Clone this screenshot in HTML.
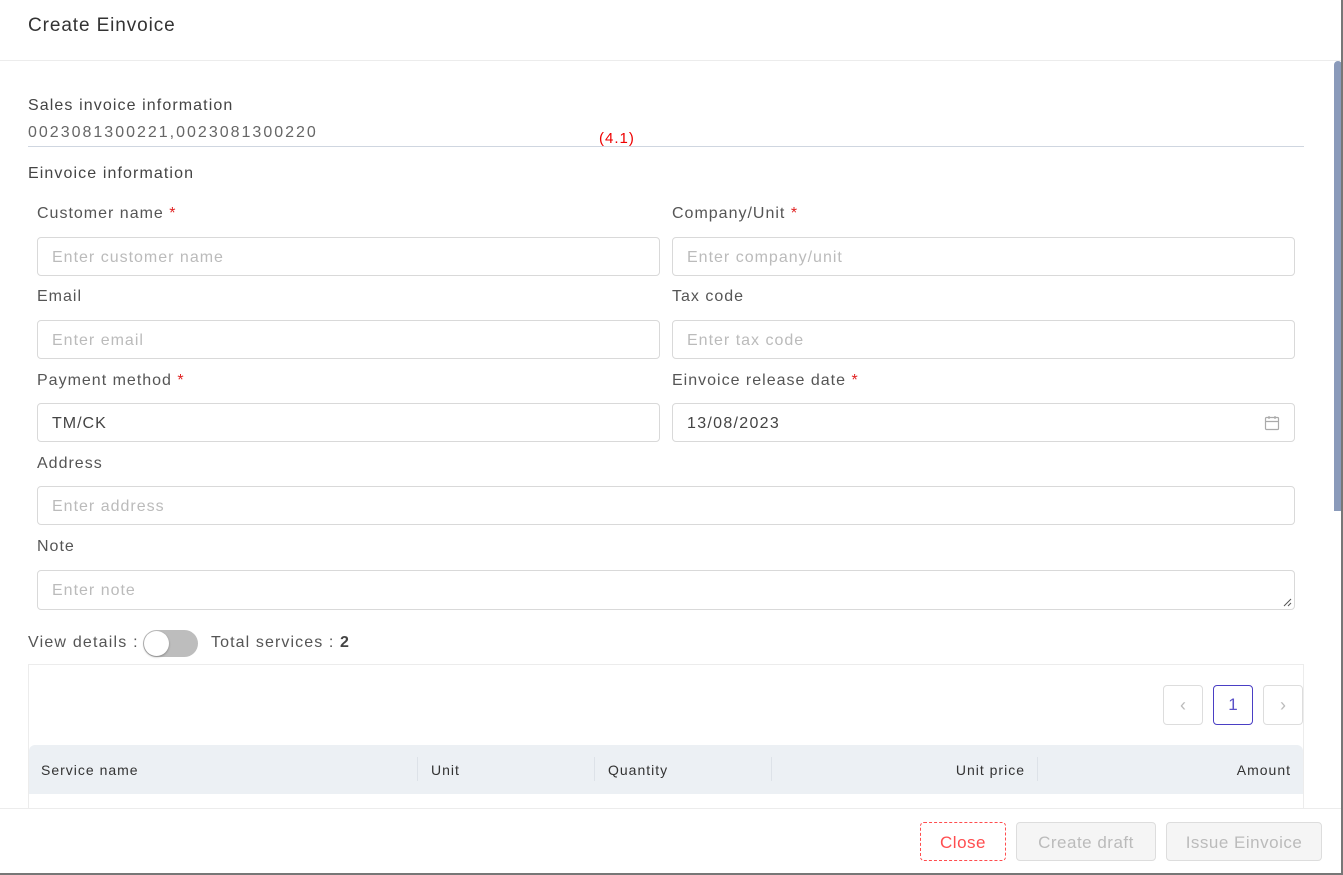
<!DOCTYPE html><html><head><style>
*{box-sizing:border-box;margin:0;padding:0}
body{width:1343px;height:875px;position:relative;overflow:hidden;background:#fff;font-family:"Liberation Sans",sans-serif;color:#555;letter-spacing:1px}
.a{position:absolute;white-space:nowrap}
.lbl{font-size:16px;color:#555}
.lbl b{color:#e02020;font-weight:normal}
.in{position:absolute;height:39px;border:1px solid #d9d9d9;border-radius:4px;font-size:16px;color:#bbb;padding:0 14px;line-height:39px}
.th{font-size:14px;color:#333;position:absolute;top:762px}
.sep{position:absolute;top:757px;width:1px;height:24px;background:#dde2e8}
.btn{position:absolute;top:822px;height:39px;border-radius:4px;font-size:17px;line-height:39px;text-align:center;letter-spacing:0.5px}
</style></head><body>
<div class="a" style="left:28px;top:15px;font-size:19px;color:#333;letter-spacing:0.9px">Create Einvoice</div>
<div class="a" style="left:0;top:60px;width:1341px;height:1px;background:#ececec"></div>
<div class="a" style="left:1334px;top:61px;width:8px;height:450px;background:#8a9aba;border-radius:4px 4px 0 0"></div>
<div class="a" style="left:1341px;top:0;width:2px;height:875px;background:#777"></div>
<div class="a" style="left:0;top:873px;width:1343px;height:2px;background:#777"></div>

<div class="a" style="left:28px;top:97px;font-size:16px;color:#444;letter-spacing:1.1px">Sales invoice information</div>
<div class="a" style="left:28px;top:124px;font-size:16px;color:#666;letter-spacing:2px">0023081300221,0023081300220</div>
<div class="a" style="left:599px;top:130px;font-size:15px;color:#e00;letter-spacing:1px">(4.1)</div>
<div class="a" style="left:28px;top:146px;width:1276px;height:1px;background:#cfd6e0"></div>
<div class="a" style="left:28px;top:165px;font-size:16px;color:#444;letter-spacing:1.1px">Einvoice information</div>

<div class="a lbl" style="left:37px;top:205px">Customer name <b>*</b></div>
<div class="a lbl" style="left:672px;top:205px">Company/Unit <b>*</b></div>
<div class="in" style="left:37px;top:237px;width:623px">Enter customer name</div>
<div class="in" style="left:672px;top:237px;width:623px">Enter company/unit</div>

<div class="a lbl" style="left:37px;top:288px">Email</div>
<div class="a lbl" style="left:672px;top:288px">Tax code</div>
<div class="in" style="left:37px;top:320px;width:623px">Enter email</div>
<div class="in" style="left:672px;top:320px;width:623px">Enter tax code</div>

<div class="a lbl" style="left:37px;top:372px">Payment method <b>*</b></div>
<div class="a lbl" style="left:672px;top:372px">Einvoice release date <b>*</b></div>
<div class="in" style="left:37px;top:403px;width:623px;color:#444">TM/CK</div>
<div class="in" style="left:672px;top:403px;width:623px;color:#444;letter-spacing:1.3px">13/08/2023
<svg style="position:absolute;right:14px;top:11px" width="16" height="16" viewBox="0 0 16 16" fill="none" stroke="#aaa" stroke-width="1.2"><rect x="1.5" y="2.5" width="13" height="12" rx="1"/><path d="M1.5 6.5h13M5 1v3M11 1v3"/></svg></div>

<div class="a lbl" style="left:37px;top:455px">Address</div>
<div class="in" style="left:37px;top:486px;width:1258px">Enter address</div>
<div class="a lbl" style="left:37px;top:538px">Note</div>
<div class="in" style="left:37px;top:570px;width:1258px;height:40px">Enter note
<svg style="position:absolute;right:2px;bottom:2px" width="9" height="9" viewBox="0 0 9 9" stroke="#555"><path d="M8 1L1 8M8 5L5 8"/></svg></div>

<div class="a lbl" style="left:28px;top:634px;letter-spacing:1.2px">View details :</div>
<div class="a" style="left:143px;top:630px;width:55px;height:27px;border-radius:14px;background:#bdbdbd"></div>
<div class="a" style="left:144px;top:631px;width:25px;height:25px;border-radius:50%;background:#fff;box-shadow:0 1px 2px rgba(0,0,0,.3)"></div>
<div class="a lbl" style="left:211px;top:634px;letter-spacing:1.1px">Total services : <strong style="color:#444">2</strong></div>

<div class="a" style="left:28px;top:664px;width:1276px;height:150px;border:1px solid #ececec;border-bottom:none"></div>
<div class="a" style="left:1163px;top:685px;width:40px;height:40px;border:1px solid #ddd;border-radius:4px;text-align:center;line-height:38px;color:#bbb;font-size:18px;letter-spacing:0">&#8249;</div>
<div class="a" style="left:1213px;top:685px;width:40px;height:40px;border:1px solid #4a3fc4;border-radius:4px;text-align:center;line-height:38px;color:#5a50c8;font-size:17px;letter-spacing:0">1</div>
<div class="a" style="left:1263px;top:685px;width:40px;height:40px;border:1px solid #ddd;border-radius:4px;text-align:center;line-height:38px;color:#bbb;font-size:18px;letter-spacing:0">&#8250;</div>

<div class="a" style="left:29px;top:745px;width:1274px;height:49px;background:#ecf0f4;border-radius:6px 6px 0 0"></div>
<div class="th" style="left:41px">Service name</div>
<div class="sep" style="left:417px"></div>
<div class="th" style="left:431px">Unit</div>
<div class="sep" style="left:594px"></div>
<div class="th" style="left:608px">Quantity</div>
<div class="sep" style="left:771px"></div>
<div class="th" style="right:318px">Unit price</div>
<div class="sep" style="left:1037px"></div>
<div class="th" style="right:52px">Amount</div>

<div class="a" style="left:0;top:808px;width:1341px;height:65px;background:#fff;border-top:1px solid #ececec"></div>
<div class="btn" style="left:920px;width:86px;border:1px dashed #ff4d4f;color:#ff4d4f">Close</div>
<div class="btn" style="left:1016px;width:140px;border:1px solid #ddd;background:#f5f5f5;color:#bbb">Create draft</div>
<div class="btn" style="left:1166px;width:156px;border:1px solid #ddd;background:#f5f5f5;color:#bbb">Issue Einvoice</div>
</body></html>
